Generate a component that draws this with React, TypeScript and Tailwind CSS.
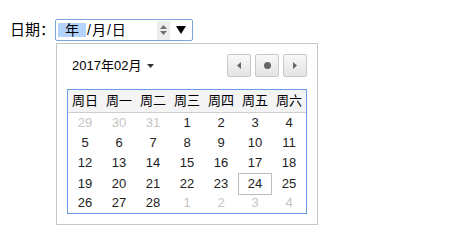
import React from 'react';

const weekdays = ['周日', '周一', '周二', '周三', '周四', '周五', '周六'];

type Day = { n: number; muted?: boolean; selected?: boolean };

const weeks: Day[][] = [
  [{ n: 29, muted: true }, { n: 30, muted: true }, { n: 31, muted: true }, { n: 1 }, { n: 2 }, { n: 3 }, { n: 4 }],
  [{ n: 5 }, { n: 6 }, { n: 7 }, { n: 8 }, { n: 9 }, { n: 10 }, { n: 11 }],
  [{ n: 12 }, { n: 13 }, { n: 14 }, { n: 15 }, { n: 16 }, { n: 17 }, { n: 18 }],
  [{ n: 19 }, { n: 20 }, { n: 21 }, { n: 22 }, { n: 23 }, { n: 24, selected: true }, { n: 25 }],
  [{ n: 26 }, { n: 27 }, { n: 28 }, { n: 1, muted: true }, { n: 2, muted: true }, { n: 3, muted: true }, { n: 4, muted: true }]
];

const font = { fontFamily: '"Liberation Sans", "Noto Sans CJK SC", sans-serif' };

function NavButton({ children }: { children: React.ReactNode }) {
  return (
    <button className="flex h-[23px] w-[24px] items-center justify-center rounded-[2px] border border-[#c8c8c8] bg-gradient-to-b from-[#f8f8f8] to-[#e4e4e4]">
      {children}
    </button>
  );
}

export default function App() {
  return (
    <div className="h-[242px] w-[460px] bg-white text-black" style={font}>
      <div className="flex items-center pl-[10px] pt-[19px]">
        <span className="w-[45px] whitespace-nowrap text-[15px] leading-[22px]">日期：</span>
        <div className="flex h-[22px] w-[138px] items-center rounded-[2px] border border-[#7ba3dc] pl-[2px] text-[14px]">
          <span className="flex h-[14px] w-[28px] items-center justify-center bg-[#b4d3fb]">年</span>
          <span className="ml-[1px] tracking-[1px]">/月/日</span>
          <div className="ml-auto mr-[6px] flex items-center">
            <div className="flex h-[19px] w-[13px] flex-col items-center justify-center gap-[2px] bg-[#ededed]">
              <svg width="7" height="4" viewBox="0 0 7 4"><path d="M3.5 0L7 4H0z" fill="#707070" /></svg>
              <svg width="7" height="4" viewBox="0 0 7 4"><path d="M0 0h7L3.5 4z" fill="#707070" /></svg>
            </div>
            <svg className="ml-[6px]" width="10" height="8" viewBox="0 0 10 8"><path d="M0 0h10L5 8z" fill="#000" /></svg>
          </div>
        </div>
      </div>

      <div className="ml-[56px] mt-[2px] w-[262px] border border-[#c6c6c6] px-[10px] pb-[10px] pt-[10px]">
        <div className="flex items-center justify-between">
          <div className="flex items-center pl-[5px] text-[13px]">
            <span>2017年02月</span>
            <svg className="ml-[6px]" width="7" height="4" viewBox="0 0 7 4"><path d="M0 0h7L3.5 4z" fill="#333" /></svg>
          </div>
          <div className="flex gap-[4px]">
            <NavButton>
              <svg width="4" height="7" viewBox="0 0 4 7"><path d="M4 0v7L0 3.5z" fill="#666" /></svg>
            </NavButton>
            <NavButton>
              <span className="h-[7px] w-[7px] rounded-full bg-[#666]" />
            </NavButton>
            <NavButton>
              <svg width="4" height="7" viewBox="0 0 4 7"><path d="M0 0v7L4 3.5z" fill="#666" /></svg>
            </NavButton>
          </div>
        </div>

        <div className="mt-[12px] border border-[#6a9be6] text-[13px]">
          <div className="grid h-[23px] grid-cols-7 items-center border-b border-[#cfcfcf] bg-[#f4f4f4]">
            {weekdays.map((w) => (
              <div key={w} className="text-center">{w}</div>
            ))}
          </div>
          {weeks.map((week, i) => (
            <div key={i} className="grid h-[20px] grid-cols-7">
              {week.map((d, j) => (
                <div
                  key={j}
                  className={`flex items-center justify-center ${d.muted ? 'text-[#c4c4c4]' : 'text-[#222]'} ${d.selected ? 'border border-[#bdbdbd]' : ''}`}
                >
                  {d.n}
                </div>
              ))}
            </div>
          ))}
        </div>
      </div>
    </div>
  );
}
